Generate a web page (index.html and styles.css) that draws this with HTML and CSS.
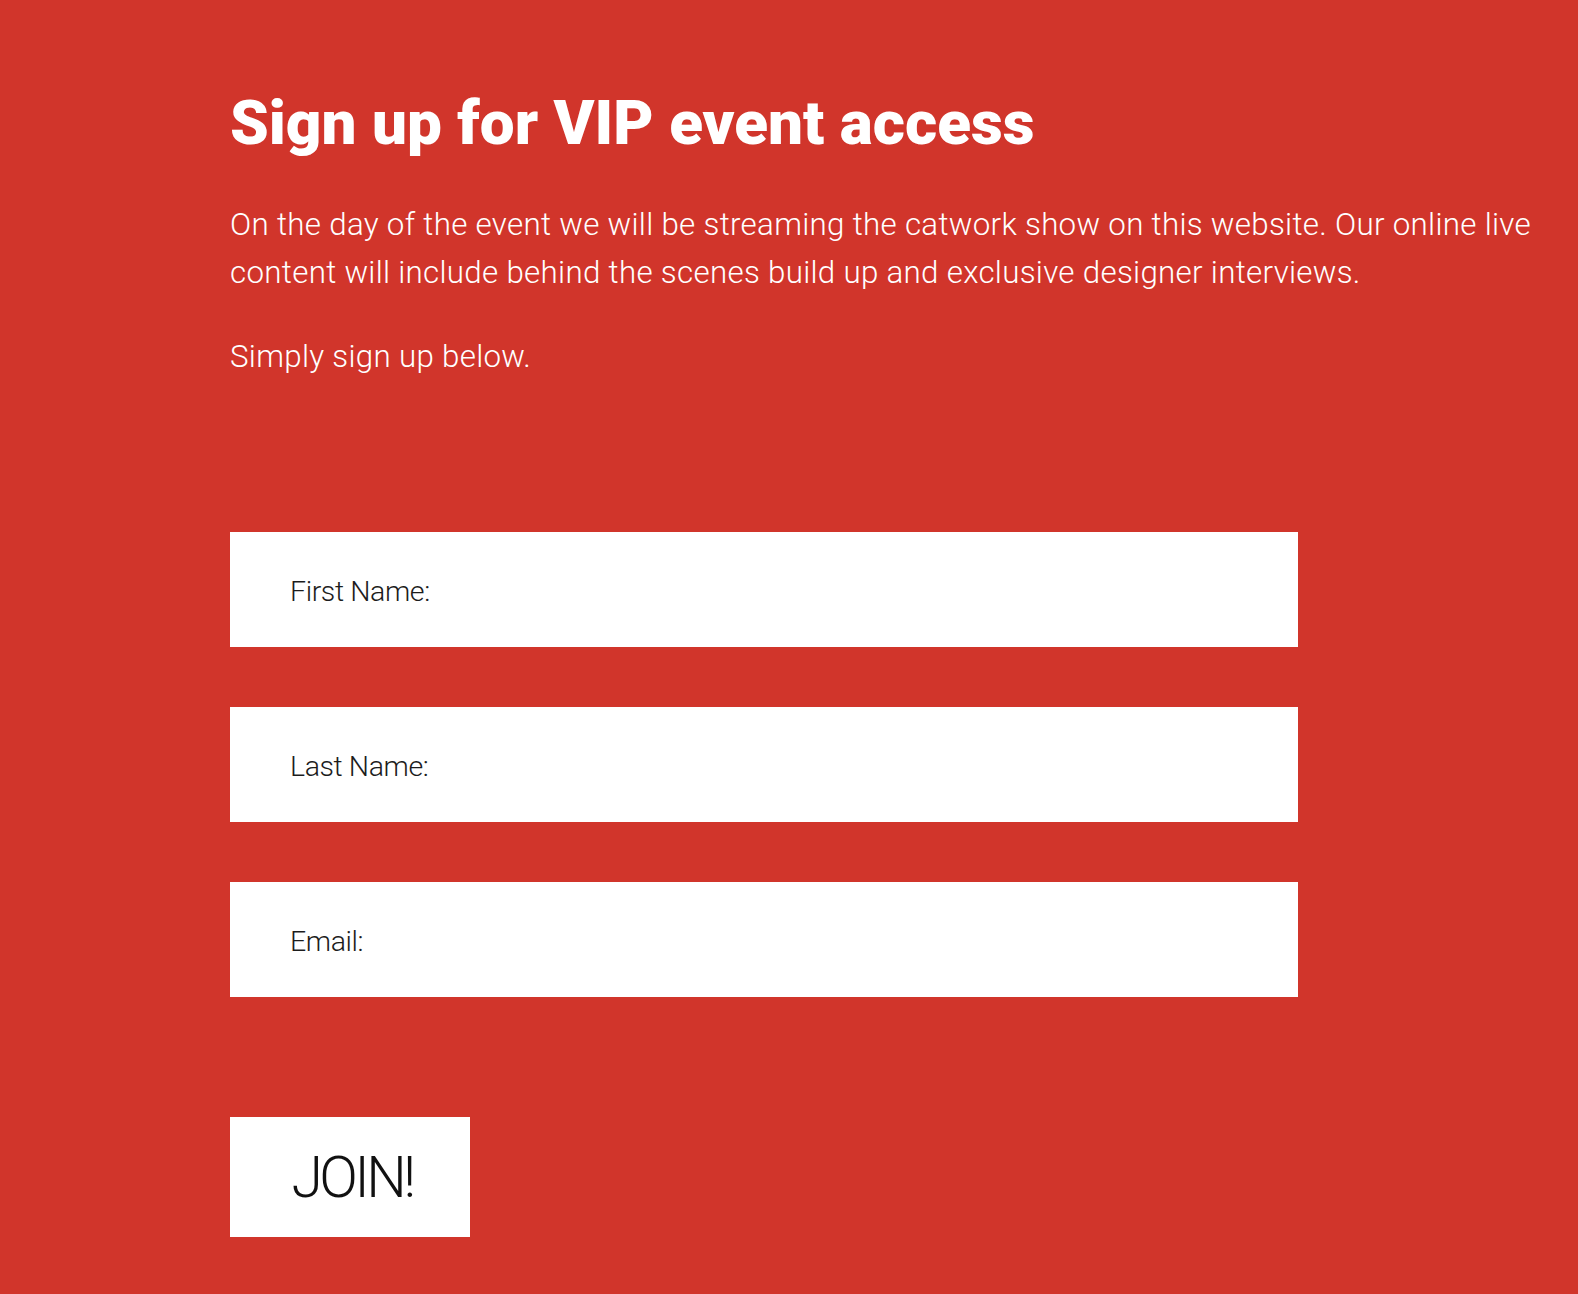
FILE: index.html
```html
<!DOCTYPE html>
<html lang="en">
<head>
<meta charset="utf-8">
<title>Sign up for VIP event access</title>
<link rel="stylesheet" href="styles.css">
</head>
<body>
<main class="page">
  <h1 class="title">Sign up for VIP event access</h1>
  <p class="lead">On the day of the event we will be streaming the catwork show on this website. Our online live content will include behind the scenes build up and exclusive designer interviews.</p>
  <p class="lead">Simply sign up below.</p>
  <form class="signup" onsubmit="return false">
    <label class="field"><span class="field-label">First Name:</span><input class="field-input" type="text" name="first"></label>
    <label class="field"><span class="field-label">Last Name:</span><input class="field-input" type="text" name="last"></label>
    <label class="field"><span class="field-label">Email:</span><input class="field-input" type="email" name="email"></label>
    <button class="join" type="submit">JOIN!</button>
  </form>
</main>
</body>
</html>
```
FILE: styles.css
```css
html, body {
  margin: 0;
  padding: 0;
  background: #d1352b;
}
body {
  min-height: 1294px;
  font-family: Roboto, "Liberation Sans", sans-serif;
  color: #ffffff;
}
.page {
  width: 1320px;
  padding: 87px 0 0 230px;
  display: flex;
  flex-direction: column;
}
.title {
  margin: 0 0 42px;
  font-family: Roboto, "Liberation Sans", sans-serif;
  font-weight: 900;
  font-size: 62px;
  line-height: 72px;
  letter-spacing: 0;
}
.lead {
  max-width: 1318px;
  margin: 0 0 36px;
  font-weight: 300;
  font-size: 31.3px;
  line-height: 48px;
  letter-spacing: 0.3px;
}
.signup {
  margin-top: 115px;
  display: flex;
  flex-direction: column;
  gap: 60px;
  align-items: flex-start;
}
.field {
  width: 1068px;
  height: 115px;
  background: #ffffff;
  display: flex;
  align-items: center;
  padding: 4px 0 0 60px;
  box-sizing: border-box;
  gap: 8px;
}
.field-label {
  font-weight: 300;
  font-size: 28.5px;
  color: #1c1c1c;
  letter-spacing: -0.4px;
  white-space: nowrap;
}
.field-input {
  flex: 1;
  border: 0;
  outline: none;
  background: transparent;
  font: inherit;
  font-size: 28px;
  height: 100%;
}
.join {
  margin-top: 60px;
  width: 240px;
  height: 120px;
  border: 0;
  background: #ffffff;
  color: #111111;
  font-family: Roboto, "Liberation Sans", sans-serif;
  font-weight: 300;
  font-size: 57px;
  letter-spacing: -3.5px;
  padding: 0 0 0 4px;
  cursor: pointer;
}
```
